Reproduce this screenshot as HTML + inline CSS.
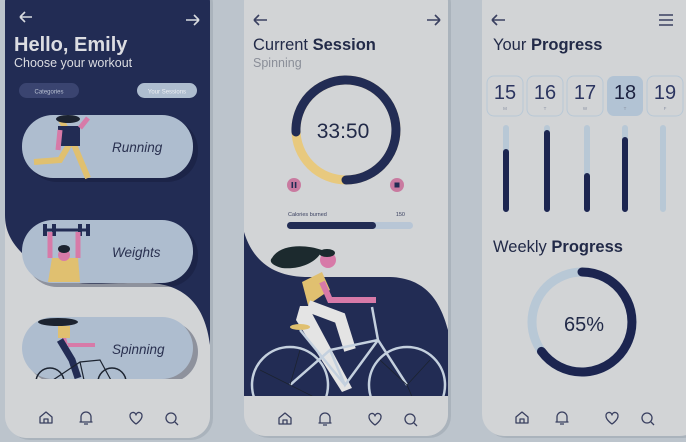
<!DOCTYPE html>
<html><head><meta charset="utf-8"><style>
html,body{margin:0;padding:0;width:686px;height:442px;overflow:hidden;background:#bcc4cc;font-family:"Liberation Sans",sans-serif}
svg{position:absolute;left:0;top:0}
</style></head><body>
<svg width="686" height="442" viewBox="0 0 686 442" xmlns="http://www.w3.org/2000/svg">
<defs>
<clipPath id="p1"><rect x="5" y="-20" width="205" height="458" rx="22"/></clipPath>
<clipPath id="p2"><rect x="244" y="-20" width="204" height="456" rx="22"/></clipPath>
<clipPath id="p3"><rect x="482" y="-20" width="220" height="456" rx="22"/></clipPath>
<g id="nav" fill="none" stroke="#3a4060" stroke-width="1.3" stroke-linejoin="round">
<path d="M-6 4 V-2 L0 -7 L6 -2 V4 Z M-2 4 V0 H2 V4"/>
<path d="M35 3 V-2 A5 5 0 0 1 45 -2 V3 H46 H34 Z M38 5 H42"/>
<path d="M84 -3 A2.8 2.8 0 0 1 90 -4 A2.8 2.8 0 0 1 96 -3 C96 1 90 5 90 5 C90 5 84 1 84 -3 Z"/>
<circle cx="125" cy="-1" r="5"/><path d="M129 3 L132 6"/>
</g>
</defs>
<rect x="8" y="-18" width="205" height="458" rx="22" fill="#aab3bc"/>
<rect x="247" y="-18" width="204" height="456" rx="22" fill="#aab3bc"/>
<rect x="485" y="-18" width="220" height="456" rx="22" fill="#aab3bc"/>

<!-- PHONE 1 -->
<g clip-path="url(#p1)">
<rect x="5" y="-20" width="205" height="458" fill="#d2d4d6"/>
<path d="M5 -20 H210 V345 C205 305 185 285 150 283 C90 282 70 290 40 268 C15 250 5 235 5 215 Z" fill="#222c54"/>
<path d="M20 17 H32 M20 17 L25 12 M20 17 L25 22" stroke="#d8dbe0" stroke-width="1.6" fill="none"/>
<path d="M186 20 H199 M199 20 L194 15 M199 20 L194 25" stroke="#d8dbe0" stroke-width="1.6" fill="none"/>
<text x="14" y="51" font-size="20" font-weight="bold" fill="#dcdde2">Hello, Emily</text>
<text x="14" y="67" font-size="12.5" fill="#dcdde2">Choose your workout</text>
<rect x="19" y="83" width="60" height="15" rx="7.5" fill="#3a4470"/>
<text x="49" y="93.5" font-size="6" fill="#b9c1d2" text-anchor="middle">Categories</text>
<rect x="137" y="83" width="60" height="15" rx="7.5" fill="#aebdcf"/>
<text x="167" y="93.5" font-size="6" fill="#eef0f4" text-anchor="middle">Your Sessions</text>
<g>
<rect x="26" y="119" width="172" height="63" rx="31" fill="#101734" opacity=".35"/>
<rect x="22" y="115" width="171" height="63" rx="31" fill="#aebdcf"/>
<path d="M60 118 L72 140 L60 160 L34 162 M72 140 L88 178" stroke="#e0c070" stroke-width="6" fill="none"/>
<rect x="58" y="126" width="22" height="20" fill="#222c54"/>
<path d="M80 128 L88 118 M60 130 L58 150" stroke="#d77aa8" stroke-width="5"/>
<ellipse cx="68" cy="119" rx="12" ry="4" fill="#1c2330"/>
<text x="112" y="152" font-size="13.5" font-style="italic" fill="#2a3150">Running</text>
</g>
<g>
<rect x="26" y="224" width="172" height="63" rx="31" fill="#101734" opacity=".35"/>
<rect x="22" y="220" width="171" height="63" rx="31" fill="#aebdcf"/>
<path d="M44 230 H90" stroke="#222c54" stroke-width="3"/>
<rect x="43" y="224" width="4" height="12" fill="#222c54"/><rect x="52" y="224" width="4" height="12" fill="#222c54"/>
<rect x="78" y="224" width="4" height="12" fill="#222c54"/><rect x="86" y="224" width="4" height="12" fill="#222c54"/>
<path d="M50 232 V258 M78 232 V258" stroke="#d77aa8" stroke-width="5"/>
<path d="M48 282 L52 258 H78 L80 282 Z" fill="#e0c070"/>
<circle cx="64" cy="255" r="6" fill="#d77aa8"/><ellipse cx="64" cy="249" rx="6" ry="4" fill="#1c2330"/>
<text x="112" y="257" font-size="13.5" font-style="italic" fill="#2a3150">Weights</text>
</g>
<g>
<rect x="26" y="321" width="172" height="62" rx="31" fill="#101734" opacity=".35"/>
<rect x="22" y="317" width="171" height="62" rx="31" fill="#aebdcf"/>
<ellipse cx="58" cy="322" rx="20" ry="4" fill="#1c2330"/>
<path d="M62 330 L66 345 M68 345 H95" stroke="#d77aa8" stroke-width="4"/>
<rect x="58" y="326" width="12" height="12" fill="#e0c070"/>
<path d="M60 340 L72 360 L78 378" stroke="#222c54" stroke-width="7" fill="none"/>
<circle cx="50" cy="382" r="14" fill="none" stroke="#1c2330" stroke-width="1.5"/>
<circle cx="112" cy="382" r="14" fill="none" stroke="#1c2330" stroke-width="1.5"/>
<path d="M50 382 L80 362 L100 360 L112 382 M80 362 L84 380" stroke="#1c2330" stroke-width="1.2" fill="none"/>
<text x="112" y="354" font-size="13.5" font-style="italic" fill="#2a3150">Spinning</text>
</g>
<rect x="5" y="379" width="205" height="60" fill="#d2d4d6"/>
</g>

<!-- PHONE 2 -->
<g clip-path="url(#p2)">
<rect x="244" y="-20" width="204" height="458" fill="#d2d4d6"/>
<path d="M244 232 C252 258 270 276 305 277 H390 C425 278 440 300 448 330 V396 H244 Z" fill="#222c54"/>
<path d="M254 20 H267 M254 20 L259 15 M254 20 L259 25" stroke="#3a4060" stroke-width="1.6" fill="none"/>
<path d="M427 20 H440 M440 20 L435 15 M440 20 L435 25" stroke="#3a4060" stroke-width="1.6" fill="none"/>
<text x="253" y="50" font-size="16.5" fill="#222a48">Current <tspan font-weight="bold">Session</tspan></text>
<text x="253" y="67" font-size="12.5" fill="#8a8e98">Spinning</text>
<circle cx="346" cy="130" r="50" fill="none" stroke="#e8c97e" stroke-width="9"/>
<path d="M346 180 A50 50 0 1 0 296 132" fill="none" stroke="#222c54" stroke-width="9" stroke-linecap="round"/>
<text x="343" y="138" font-size="21" fill="#222a48" text-anchor="middle">33:50</text>
<circle cx="294" cy="185" r="7" fill="#c97aa0"/>
<rect x="291.5" y="182" width="1.6" height="6" fill="#222c54"/><rect x="294.8" y="182" width="1.6" height="6" fill="#222c54"/>
<circle cx="397" cy="185" r="7" fill="#c97aa0"/>
<rect x="394.5" y="182.5" width="5" height="5" fill="#222c54"/>
<text x="288" y="216" font-size="5.5" fill="#3a4060">Calories burned</text>
<text x="405" y="216" font-size="5.5" fill="#3a4060" text-anchor="end">150</text>
<rect x="287" y="222" width="126" height="7" rx="3.5" fill="#b8c6d6"/>
<rect x="287" y="222" width="89" height="7" rx="3.5" fill="#222c54"/>
<path d="M272 258 C280 244 305 244 322 250 C318 262 300 270 282 268 C274 266 268 262 272 258 Z" fill="#1c2a2e"/>
<circle cx="328" cy="260" r="8" fill="#d77aa8"/><ellipse cx="327" cy="253" rx="8" ry="4" fill="#1c2a2e"/>
<path d="M302 282 L322 272 L330 290 L308 305 Z" fill="#e0c070"/>
<path d="M322 282 L330 300 H376" stroke="#d77aa8" stroke-width="6" fill="none"/>
<path d="M300 306 L308 306 L352 388 L342 392 L296 320 Z" fill="#e4e4e4"/>
<path d="M308 306 L340 318 L350 350" stroke="#e4e4e4" stroke-width="12" fill="none"/>
<ellipse cx="300" cy="327" rx="10" ry="3" fill="#e0c070"/>
<g stroke="#c4d0de" stroke-width="2.5" fill="none">
<circle cx="290" cy="385" r="38"/><circle cx="407" cy="385" r="38"/>
<path d="M290 385 L330 350 L378 340 L407 385 M330 350 L345 385 L378 340 M372 307 L378 340 M300 330 L345 385"/>
</g>
<g stroke="#1c2330" stroke-width="0.8"><path d="M290 385 L260 370 M290 385 L300 350 M290 385 L320 400 M407 385 L380 360 M407 385 L430 360 M407 385 L420 415"/></g>
<rect x="244" y="396" width="204" height="42" fill="#d2d4d6"/>
</g>

<!-- PHONE 3 -->
<g clip-path="url(#p3)">
<rect x="482" y="-20" width="220" height="458" fill="#d2d4d6"/>
<path d="M492 20 H505 M492 20 L497 15 M492 20 L497 25" stroke="#3a4060" stroke-width="1.6" fill="none"/>
<path d="M659 15 H673 M659 20 H673 M659 25 H673" stroke="#3a4060" stroke-width="1.5"/>
<text x="493" y="50" font-size="16.5" fill="#222a48">Your <tspan font-weight="bold">Progress</tspan></text>
<g font-size="20" fill="#2c3560" text-anchor="middle">
<rect x="487" y="76" width="36" height="40" rx="7" fill="none" stroke="#b8c8d6"/>
<rect x="527" y="76" width="36" height="40" rx="7" fill="none" stroke="#b8c8d6"/>
<rect x="567" y="76" width="36" height="40" rx="7" fill="none" stroke="#b8c8d6"/>
<rect x="607" y="76" width="36" height="40" rx="7" fill="#b2c3d4"/>
<rect x="647" y="76" width="36" height="40" rx="7" fill="none" stroke="#b8c8d6"/>
<text x="505" y="99">15</text><text x="545" y="99">16</text><text x="585" y="99">17</text><text x="625" y="99" fill="#1c2240">18</text><text x="665" y="99">19</text>
<g font-size="4.5" fill="#8a92a4"><text x="505" y="110">M</text><text x="545" y="110">T</text><text x="585" y="110">W</text><text x="625" y="110">T</text><text x="665" y="110">F</text></g>
</g>
<g stroke-width="6" stroke-linecap="round">
<path d="M506 128 V209 M547 128 V209 M587 128 V209 M625 128 V209 M663 128 V209" stroke="#b8c8d6"/>
<path d="M506 152 V209 M547 133 V209 M587 176 V209 M625 140 V209" stroke="#1c2550"/>
</g>
<text x="493" y="252" font-size="16.5" fill="#222a48">Weekly <tspan font-weight="bold">Progress</tspan></text>
<circle cx="582" cy="322" r="50" fill="none" stroke="#b8c8d6" stroke-width="9"/>
<path d="M582 272 A50 50 0 1 1 541.5 351.4" fill="none" stroke="#1c2550" stroke-width="9" stroke-linecap="round"/>
<text x="584" y="331" font-size="20" fill="#222a48" text-anchor="middle">65%</text>
</g>

<use href="#nav" x="46" y="419"/>
<use href="#nav" x="285" y="420"/>
<use href="#nav" x="522" y="419"/>
</svg>
</body></html>
